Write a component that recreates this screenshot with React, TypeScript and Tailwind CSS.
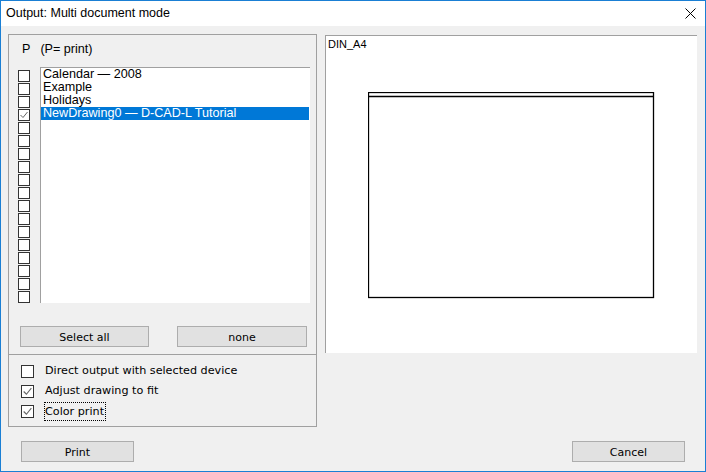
import React from "react";

const F = { fontFamily: '"DejaVu Sans", Verdana, sans-serif' };
const L = { fontFamily: '"Liberation Sans", Arial, sans-serif' };

function Check({ checked, size = 12, color = "#333" }: { checked?: boolean; size?: number; color?: string }) {
  return (
    <div
      className="bg-white border box-border flex items-center justify-center shrink-0"
      style={{ width: size, height: size, borderColor: color }}
    >
      {checked && (
        <svg width={size - 2} height={size - 2} viewBox="0 0 10 10">
          <polyline points="1.5,5 4,7.5 8.5,2" fill="none" stroke="#666" strokeWidth="1" />
        </svg>
      )}
    </div>
  );
}

function Btn({ label, w }: { label: string; w: number }) {
  return (
    <div
      className="h-[21px] bg-[#e1e1e1] border border-[#adadad] flex items-center justify-center text-[11px] leading-[13px] pt-[1px] text-black"
      style={{ width: w }}
    >
      {label}
    </div>
  );
}

export default function App() {
  const items = ["Calendar — 2008", "Example", "Holidays", "NewDrawing0 — D-CAD-L Tutorial"];
  const checks = Array.from({ length: 18 }, (_, i) => i === 3);
  return (
    <div className="w-[706px] h-[472px] border border-[#1a7fd4] bg-[#f0f0f0] flex flex-col box-border text-black" style={F}>
      <div className="h-[25px] bg-white flex items-center justify-between pl-[5px] pr-[9px] shrink-0">
        <span className="text-[12.5px]" style={L}>
          Output: Multi document mode
        </span>
        <svg width="11" height="11" viewBox="0 0 11 11">
          <path d="M0.5 0.5 L10.5 10.5 M10.5 0.5 L0.5 10.5" stroke="#000" strokeWidth="1" />
        </svg>
      </div>
      <div className="flex-1 flex flex-col px-[7px] pt-[8px]">
        <div className="flex">
          <div className="w-[309px] flex flex-col">
            <div className="h-[321px] border border-[#a0a0a0] flex flex-col pt-[7px]">
              <div className="h-[14px] flex items-center text-[12.6px] leading-[14px]" style={L}>
                <span className="ml-[13px]">P</span>
                <span className="ml-[10px]">(P= print)</span>
              </div>
              <div className="flex mt-[11px] ml-[9px]">
                <div className="flex flex-col gap-[1px] mt-[3px]">
                  {checks.map((c, i) => (
                    <Check key={i} checked={c} />
                  ))}
                </div>
                <div className="ml-[10px] w-[270px] h-[236px] bg-white border-t border-l border-[#a0a0a0] flex flex-col" style={L}>
                  {items.map((t, i) => (
                    <div
                      key={i}
                      className={
                        "h-[13px] leading-[13px] text-[12.6px] pl-[2px] mr-[1px] whitespace-nowrap " +
                        (i === 3 ? "bg-[#0078d7] text-white" : "")
                      }
                    >
                      {t}
                    </div>
                  ))}
                </div>
              </div>
              <div className="flex mt-[23px] ml-[11px] gap-[28px]">
                <Btn label="Select all" w={129} />
                <Btn label="none" w={130} />
              </div>
            </div>
            <div className="h-[72px] border border-t-0 border-[#a0a0a0] flex flex-col pt-[6px] pl-[12px]">
              {[
                { t: "Direct output with selected device", c: false },
                { t: "Adjust drawing to fit", c: true },
                { t: "Color print", c: true, focus: true },
              ].map((r, i) => (
                <div key={i} className="h-[20px] flex items-center text-[11.2px]">
                  <Check checked={r.c} size={13} />
                  {r.focus ? (
                    <span className="ml-[10px] border border-dotted border-black h-[19px] leading-[17px] pr-[1px]">{r.t}</span>
                  ) : (
                    <span className="ml-[11px]">{r.t}</span>
                  )}
                </div>
              ))}
            </div>
          </div>
          <div className="ml-[8px] mt-[1px] w-[372px] h-[318px] bg-white border-t border-l border-[#a0a0a0] flex flex-col">
            <div className="text-[11px] leading-[13px] pl-[2px] pt-[2px]" style={L}>DIN_A4</div>
            <svg className="ml-[42px] mt-[41px]" width="287" height="207" viewBox="0 0 287 207">
              <rect x="0.5" y="0.5" width="285" height="205" fill="none" stroke="#000" strokeWidth="1.3" />
              <line x1="0" y1="4.5" x2="286" y2="4.5" stroke="#000" strokeWidth="1.3" />
            </svg>
          </div>
        </div>
        <div className="flex justify-between px-[13px] mt-[14px]">
          <Btn label="Print" w={113} />
          <Btn label="Cancel" w={113} />
        </div>
      </div>
    </div>
  );
}
